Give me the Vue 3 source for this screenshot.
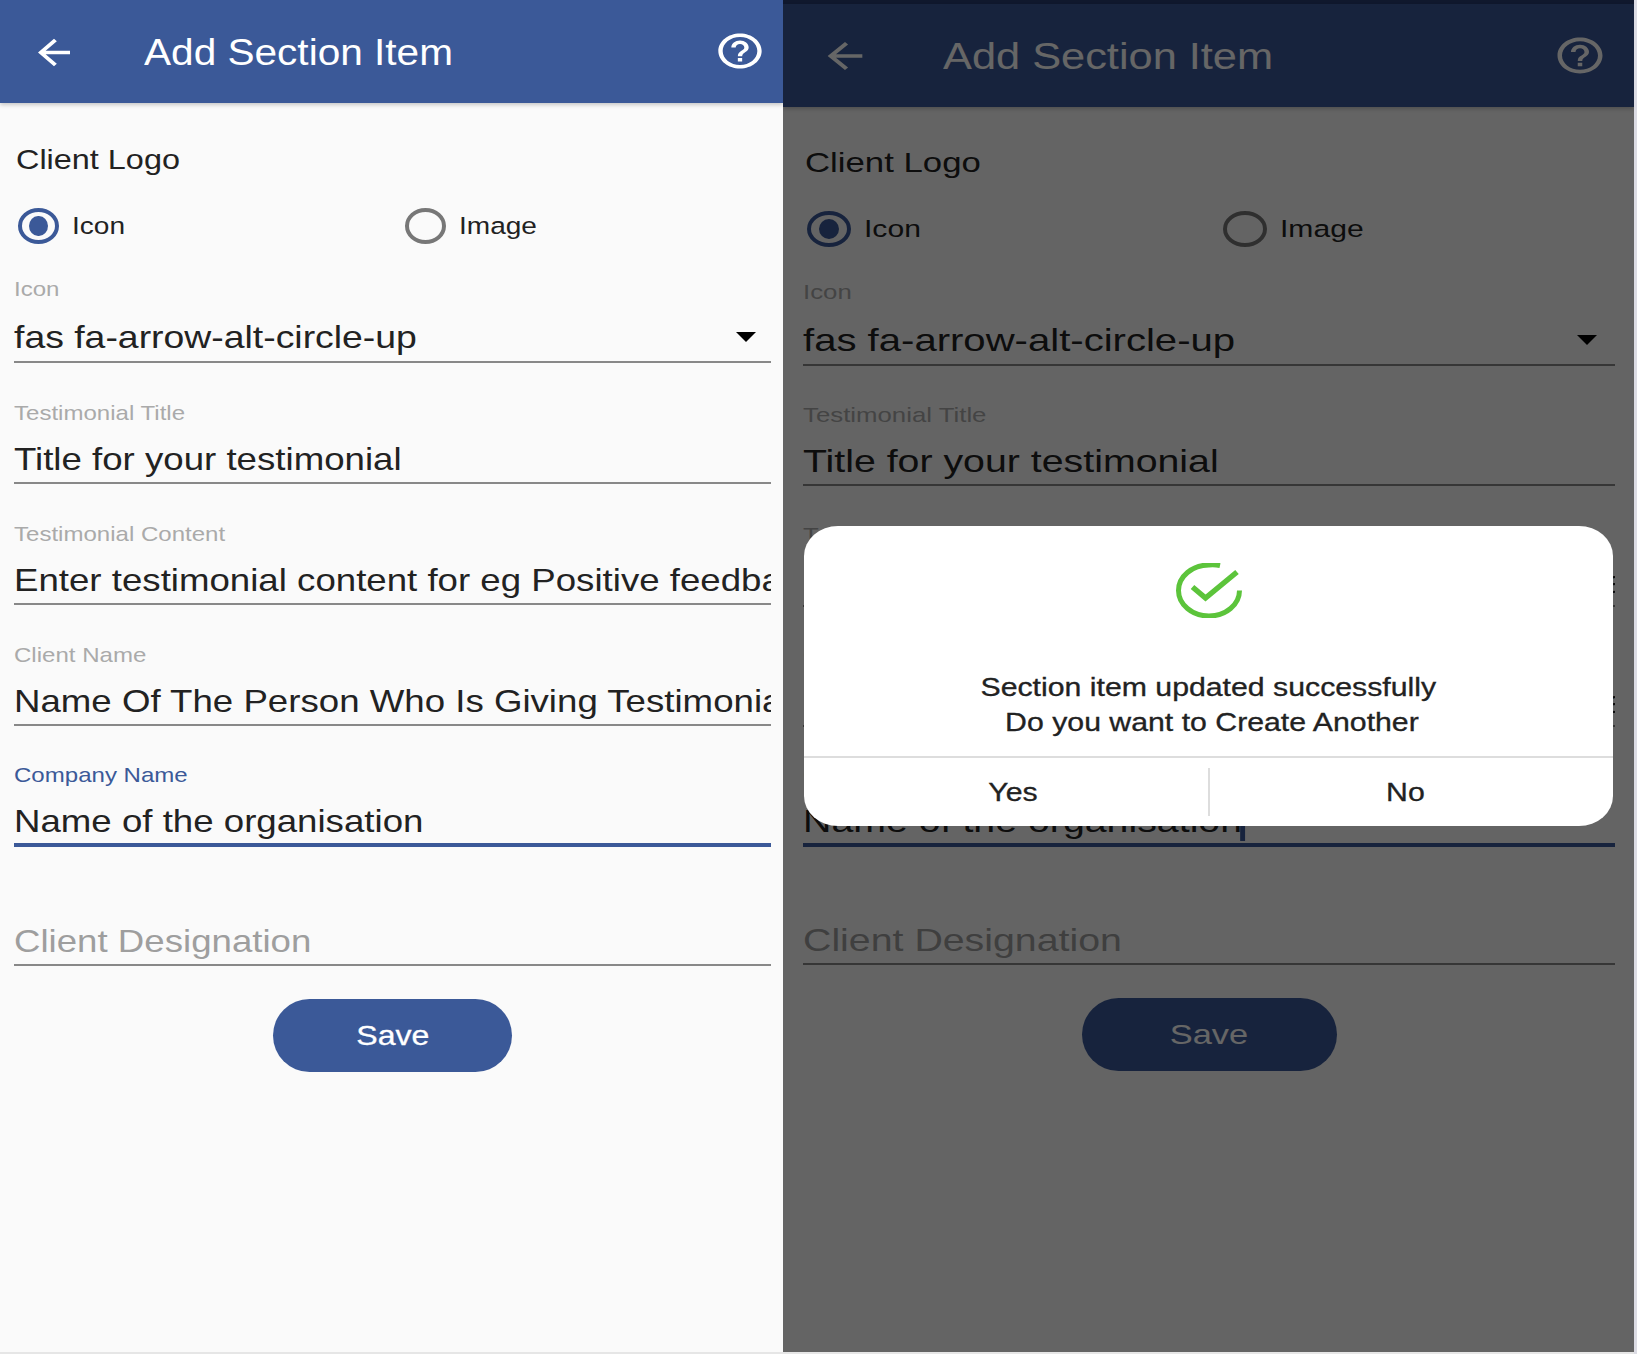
<script setup>
const screens = [
  { id: 'edit', dimmed: false },
  { id: 'done', dimmed: true }
]
const fields = [
  { label: 'Icon', value: 'fas fa-arrow-alt-circle-up', select: true },
  { label: 'Testimonial Title', value: 'Title for your testimonial' },
  { label: 'Testimonial Content', value: 'Enter testimonial content for eg Positive feedback about the service' },
  { label: 'Client Name', value: 'Name Of The Person Who Is Giving Testimonial For You' },
  { label: 'Company Name', value: 'Name of the organisation', focused: true },
  { label: '', value: 'Client Designation', placeholder: true }
]
</script>

<template>
  <div class="page">
    <section v-for="s in screens" :key="s.id" class="panel" :class="s.dimmed ? 'panel-right' : 'panel-left'">
      <div v-if="s.dimmed" class="status"></div>
      <header class="bar">
        <svg class="back" viewBox="0 0 24 24" preserveAspectRatio="none" fill="currentColor">
          <path d="M20 11H7.83l5.59-5.59L12 4l-8 8 8 8 1.41-1.41L7.83 13H20v-2z" />
        </svg>
        <h1 class="title"><span class="sx">Add Section Item</span></h1>
        <svg class="help" viewBox="0 0 24 24" preserveAspectRatio="none" fill="currentColor">
          <path d="M11 18h2v-2h-2v2zm1-16C6.48 2 2 6.48 2 12s4.48 10 10 10 10-4.48 10-10S17.52 2 12 2zm0 18c-4.41 0-8-3.59-8-8s3.59-8 8-8 8 3.59 8 8-3.59 8-8 8zm0-14c-2.21 0-4 1.79-4 4h2c0-1.1.9-2 2-2s2 .9 2 2c0 2-3 1.75-3 5h2c0-2.25 3-2.5 3-5 0-2.21-1.79-4-4-4z" />
        </svg>
      </header>

      <form class="form" @submit.prevent>
        <div class="logo-title"><span class="sx">Client Logo</span></div>
        <div class="radios">
          <label class="radio">
            <span class="ring on"><span class="dot"></span></span>
            <span class="sx">Icon</span>
          </label>
          <label class="radio">
            <span class="ring"></span>
            <span class="sx">Image</span>
          </label>
        </div>

        <div
          v-for="f in fields"
          :key="f.value"
          class="field"
          :class="{ focused: f.focused, empty: f.placeholder, select: f.select }"
        >
          <div class="label"><span class="sx">{{ f.label }}</span></div>
          <div class="value">
            <span class="sx">{{ f.value }}<i v-if="f.focused && s.dimmed" class="cursor"></i></span>
            <i v-if="f.select" class="caret"></i>
          </div>
        </div>

        <button class="save" type="button"><span class="sxc">Save</span></button>
      </form>

      <div v-if="s.dimmed" class="scrim"></div>
      <div v-if="s.dimmed" class="dialog">
        <svg class="tick" viewBox="0 0 66 55" fill="none" stroke="#5cc43b">
          <path stroke-width="5" d="M44 2.6 A30.5 25.5 0 0 0 33 2 A30.5 25.5 0 1 0 63.5 27.5" />
          <path stroke-width="5.5" d="M16.5 24 L29.5 35 L61 9" />
        </svg>
        <p class="msg"><span class="sxc">Section item updated successfully</span></p>
        <p class="msg msg-two"><span class="sxc">Do you want to Create Another</span></p>
        <div class="actions">
          <button class="act act-yes" type="button"><span class="sxc">Yes</span></button>
          <button class="act act-no" type="button"><span class="sxc">No</span></button>
        </div>
      </div>
    </section>
  </div>
</template>

<style scoped>
.page {
  display: flex;
  width: 1637px;
  height: 1354px;
  overflow: hidden;
  background: #dcdce4;
  font-family: "Liberation Sans", Arial, sans-serif;
  color: #222;
}
.panel {
  position: relative;
  flex: none;
  box-sizing: border-box;
  display: flex;
  flex-direction: column;
  height: 1354px;
  background: #fafafa;
  border-bottom: 2px solid #e6e6e6;
  overflow: hidden;
}
.panel-left {
  width: 783px;
  --sx: 1.145;
  --title-sx: 1.127;
  --pad-l: 14px;
  --pad-r: 12px;
  --row: 121px;
  --radio-w: 41px;
  --radio-col: 387px;
  --back-w: 48px;
  --back-h: 41px;
  --back-l: 30px;
  --title-l: 144px;
  --help-w: 52px;
  --help-h: 42px;
  --help-r: 17px;
  --save-w: 239px;
  --logo-top: 36px;
  --caret-r: 15px;
}
.panel-right {
  width: 851px;
  --sx: 1.228;
  --title-sx: 1.204;
  --pad-l: 20px;
  --pad-r: 19px;
  --row: 120.3px;
  --radio-w: 44px;
  --radio-col: 416px;
  --back-w: 52px;
  --back-h: 42px;
  --back-l: 36px;
  --title-l: 160px;
  --help-w: 54px;
  --help-h: 43px;
  --help-r: 27px;
  --save-w: 255px;
  --logo-top: 35px;
  --caret-r: 18px;
}
.sx {
  display: inline-block;
  white-space: nowrap;
  transform: scaleX(var(--sx));
  transform-origin: left center;
}
.sxc {
  display: inline-block;
  white-space: nowrap;
  transform: scaleX(var(--sx));
  transform-origin: center;
}
.status {
  height: 4px;
  flex: none;
  background: #283c71;
}
.bar {
  flex: none;
  display: flex;
  align-items: center;
  height: 103px;
  background: #3b5998;
  color: #fff;
  box-shadow: 0 2px 4px rgba(0, 0, 0, 0.2);
  position: relative;
}
.back {
  flex: none;
  width: var(--back-w);
  height: var(--back-h);
  margin-left: var(--back-l);
}
.panel-left .back {
  margin-top: 2px;
}
.panel-left .help {
  margin-bottom: 2px;
}
.title {
  flex: 1;
  margin: 3px 0 0 calc(var(--title-l) - var(--back-l) - var(--back-w));
  font-size: 36px;
  font-weight: 400;
  line-height: 44px;
}
.title .sx {
  transform: scaleX(var(--title-sx));
}
.help {
  flex: none;
  width: var(--help-w);
  height: var(--help-h);
  margin-right: var(--help-r);
}
.form {
  display: flex;
  flex-direction: column;
  padding: var(--logo-top) var(--pad-r) 0 var(--pad-l);
}
.logo-title {
  font-size: 28.3px;
  line-height: 40px;
  padding-left: 2px;
}
.radios {
  display: grid;
  grid-template-columns: var(--radio-col) 1fr;
  margin-top: 29px;
  padding-left: 4px;
}
.radio {
  display: flex;
  align-items: center;
  gap: 13px;
  height: 36px;
  font-size: 24.5px;
}
.ring {
  flex: none;
  box-sizing: border-box;
  display: flex;
  align-items: center;
  justify-content: center;
  width: var(--radio-w);
  height: 36px;
  border: 4px solid #777;
  border-radius: 50%;
}
.ring.on {
  border-color: #3b5998;
}
.dot {
  width: 55%;
  height: 20px;
  border-radius: 50%;
  background: #3b5998;
}
.field {
  box-sizing: border-box;
  flex: none;
  display: flex;
  flex-direction: column;
  justify-content: flex-end;
  height: var(--row);
  border-bottom: 2px solid #888;
}
.field.select {
  height: 119px;
}
.field.focused {
  border-bottom: 4px solid #3b5998;
}
.field.focused .label {
  color: #3b5998;
}
.field.empty {
  height: calc(var(--row) - 2px);
}
.label {
  height: 24px;
  margin-bottom: 14.5px;
  font-size: 21px;
  line-height: 24px;
  color: #aaa;
}
.select .label {
  margin-bottom: 16px;
}
.value {
  display: flex;
  align-items: center;
  justify-content: space-between;
  height: 40px;
  padding-bottom: 3px;
  overflow: hidden;
  font-size: 32px;
  line-height: 40px;
}
.select .value {
  padding-bottom: 4px;
}
.select .value .sx {
  transform: scaleX(calc(var(--sx) * 1.02));
}
.focused .value {
  padding-bottom: 2px;
}
.empty .value {
  color: #9e9e9e;
}
.caret {
  flex: none;
  width: 0;
  height: 0;
  margin-right: var(--caret-r);
  border-left: 10px solid transparent;
  border-right: 10px solid transparent;
  border-top: 10px solid #000;
}
.cursor {
  display: inline-block;
  width: 4px;
  height: 34px;
  margin-left: -2px;
  vertical-align: -9px;
  background: #3b5998;
}
.save {
  align-self: center;
  width: var(--save-w);
  height: 73px;
  margin-top: 33px;
  border: 0;
  border-radius: 37px;
  background: #3b5998;
  color: #fff;
  font-family: inherit;
  font-size: 28px;
  -webkit-text-stroke: 0.3px #fff;
}
.scrim {
  position: absolute;
  inset: 0;
  background: rgba(0, 0, 0, 0.6);
}
.panel-right .save {
  -webkit-text-stroke: 0;
}
.dialog {
  position: absolute;
  left: 21px;
  top: 526px;
  box-sizing: border-box;
  display: flex;
  flex-direction: column;
  align-items: center;
  width: 809px;
  height: 300px;
  padding-top: 37px;
  background: #fff;
  border-radius: 34px / 30px;
  overflow: hidden;
  color: #222;
  --sx: 1.21;
}
.tick {
  flex: none;
  width: 66px;
  height: 55px;
  margin-bottom: 52px;
}
.msg {
  margin: 0;
  font-size: 25px;
  line-height: 35px;
  -webkit-text-stroke: 0.3px #222;
}
.msg-two {
  padding-left: 7px;
}
.actions {
  display: flex;
  align-items: center;
  align-self: stretch;
  margin-top: 16px;
  flex: 1;
  border-top: 2px solid #ddd;
}
.act {
  flex: 1;
  height: 48px;
  border: 0;
  padding: 0;
  background: none;
  color: #222;
  font-family: inherit;
  font-size: 25px;
  -webkit-text-stroke: 0.3px #222;
}
.act-yes {
  border-right: 2px solid #ddd;
  margin-right: -1px;
  text-indent: 6px;
}
.act-no {
  text-indent: -5px;
}
</style>

<style>
html, body {
  margin: 0;
  overflow: hidden;
}
</style>
